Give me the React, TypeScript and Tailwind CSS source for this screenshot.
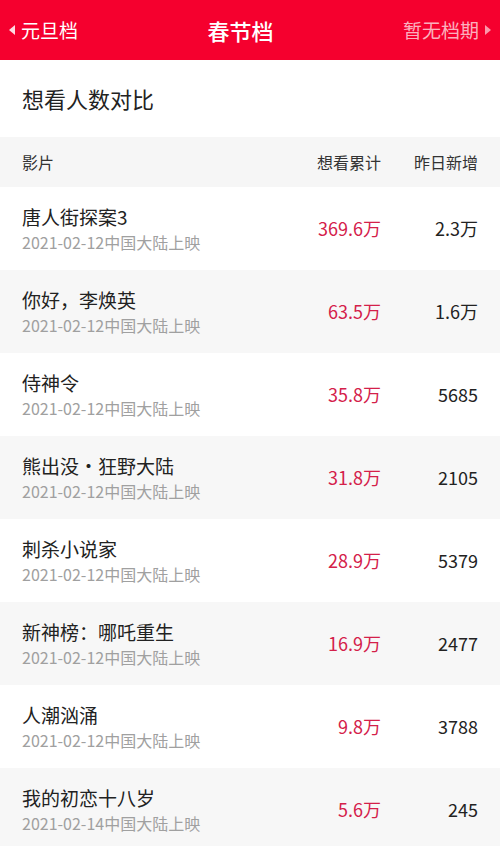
const rows = [
  { name: "唐人街探案3", date: "2021-02-12中国大陆上映", total: "369.6万", inc: "2.3万" },
  { name: "你好，李焕英", date: "2021-02-12中国大陆上映", total: "63.5万", inc: "1.6万" },
  { name: "侍神令", date: "2021-02-12中国大陆上映", total: "35.8万", inc: "5685" },
  { name: "熊出没・狂野大陆", date: "2021-02-12中国大陆上映", total: "31.8万", inc: "2105" },
  { name: "刺杀小说家", date: "2021-02-12中国大陆上映", total: "28.9万", inc: "5379" },
  { name: "新神榜：哪吒重生", date: "2021-02-12中国大陆上映", total: "16.9万", inc: "2477" },
  { name: "人潮汹涌", date: "2021-02-12中国大陆上映", total: "9.8万", inc: "3788" },
  { name: "我的初恋十八岁", date: "2021-02-14中国大陆上映", total: "5.6万", inc: "245" },
]

const App = () => {
  return (
    <div className="h-[846px] w-[500px] overflow-hidden bg-white font-['Noto_Sans_CJK_SC','Liberation_Sans',sans-serif] text-[#222]">
      {/* 顶部档期切换 */}
      <div className="flex h-[60px] items-center justify-between bg-[#f5002e] px-[9px] text-white">
        <div className="flex items-center gap-[6px]">
          <svg width="6" height="10" viewBox="0 0 6 10">
            <path d="M6 0 L0 5 L6 10 Z" fill="white" fillOpacity="0.85" />
          </svg>
          <span className="text-[19px]">元旦档</span>
        </div>
        <span className="text-[22px] font-medium">春节档</span>
        <div className="flex items-center gap-[6px] text-white/70">
          <span className="text-[19px]">暂无档期</span>
          <svg width="6" height="10" viewBox="0 0 6 10">
            <path d="M0 0 L6 5 L0 10 Z" fill="white" fillOpacity="0.6" />
          </svg>
        </div>
      </div>

      <div className="flex h-[77px] items-center px-[22px] text-[22px]">想看人数对比</div>

      <div className="flex h-[50px] items-center bg-[#f6f6f6] pl-[22px] pr-[22px] text-[16px] text-[#333]">
        <span className="flex-1">影片</span>
        <span className="w-[80px] text-right">想看累计</span>
        <span className="w-[97px] text-right">昨日新增</span>
      </div>

      {rows.map((r, i) => (
        <div
          key={r.name}
          className={`flex h-[83px] items-center pl-[22px] pr-[22px] ${i % 2 === 1 ? "bg-[#f7f7f7]" : "bg-white"}`}
        >
          <div className="flex flex-1 flex-col">
            <span className="text-[19px] leading-[26px]">{r.name}</span>
            <span className="text-[16px] leading-[24px] text-[#a0a0a0]">{r.date}</span>
          </div>
          <span className="w-[80px] text-right text-[18px] text-[#d4204a]">{r.total}</span>
          <span className="w-[97px] text-right text-[18px]">{r.inc}</span>
        </div>
      ))}
    </div>
  )
}

export default App
